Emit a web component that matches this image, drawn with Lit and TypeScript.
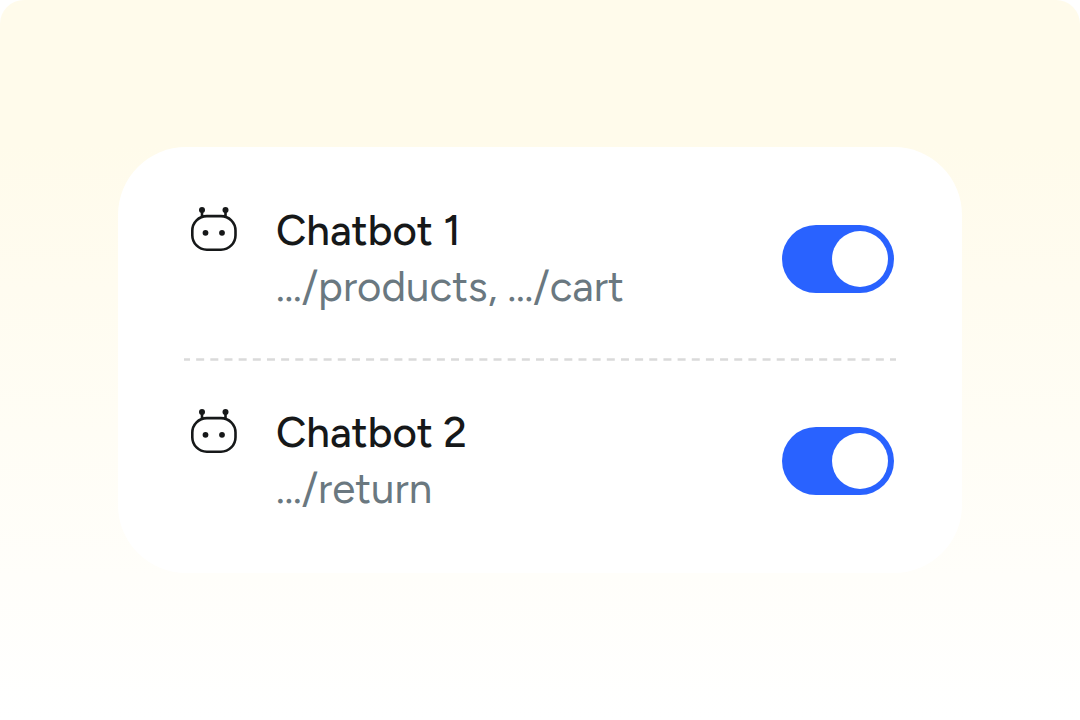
import { LitElement, html, css } from "lit";
import { customElement, property } from "lit/decorators.js";

@customElement("bot-row")
export class BotRow extends LitElement {
  @property() name = "";
  @property() paths = "";
  @property({ type: Boolean }) enabled = false;

  static styles = css`
    :host { display: block; }
    .row {
      display: flex;
      align-items: center;
      justify-content: space-between;
      gap: 24px;
      padding-right: 2px;
      cursor: pointer;
    }
    .info { display: flex; gap: 32px; min-width: 0; }
    .icon { flex: none; width: 60px; height: 60px; }
    .text { display: flex; flex-direction: column; font-size: 42px; line-height: 56px; }
    .name { color: #161819; font-weight: 500; }
    .paths { color: #6a7880; }
    .switch {
      appearance: none;
      flex: none;
      box-sizing: border-box;
      width: 112px;
      height: 68px;
      margin: 0;
      padding: 6px;
      border-radius: 34px;
      background: #c4c9cd;
      display: flex;
      cursor: pointer;
    }
    .switch::before {
      content: "";
      width: 56px;
      height: 56px;
      border-radius: 50%;
      background: #fff;
    }
    .switch:checked { background: #2962ff; justify-content: flex-end; }
  `;

  private toggle(e: Event) {
    this.enabled = (e.target as HTMLInputElement).checked;
  }

  render() {
    return html`
      <label class="row" for="switch">
        <span class="info">
          <svg class="icon" viewBox="0 0 60 60" fill="none" stroke="#161819" stroke-width="2.6" aria-hidden="true">
            <rect x="8.3" y="13.1" width="43.2" height="33.6" rx="14.5" />
            <path d="M18 13.8V7M41.5 13.8V7" />
            <g fill="#161819" stroke="none">
              <circle cx="18" cy="7" r="3" />
              <circle cx="41.5" cy="7" r="3" />
              <circle cx="21.5" cy="29.8" r="2.9" />
              <circle cx="38" cy="29.8" r="2.9" />
            </g>
          </svg>
          <span class="text">
            <span class="name">${this.name}</span>
            <span class="paths">${this.paths}</span>
          </span>
        </span>
        <input id="switch" class="switch" type="checkbox" role="switch"
          .checked=${this.enabled} @change=${this.toggle} />
      </label>
    `;
  }
}

@customElement("app-root")
export class AppRoot extends LitElement {
  static styles = css`
    :host {
      display: block;
      background: #fff;
      font-family: "Google Sans", Figtree, Lato, "Open Sans", sans-serif;
    }
    .page {
      box-sizing: border-box;
      min-height: 100vh;
      padding: 0 118px;
      display: flex;
      flex-direction: column;
      justify-content: center;
      border-radius: 24px 24px 0 0;
      background: linear-gradient(#fffbeb 0%, #fffbeb 20%, #fff 100%);
    }
    .card {
      padding: 56px 66px;
      border-radius: 68px;
      background: #fff;
    }
    .divider { display: block; width: 100%; height: 3px; margin: 43px 0 44px; }
  `;

  render() {
    return html`
      <main class="page">
        <section class="card">
          <bot-row name="Chatbot 1" paths="…/products, …/cart" enabled></bot-row>
          <svg class="divider" aria-hidden="true">
            <line x1="0" y1="1.5" x2="100%" y2="1.5" pathLength="712" stroke="#dadada"
              stroke-width="2.4" stroke-dasharray="8 6.16" stroke-dashoffset="2" />
          </svg>
          <bot-row name="Chatbot 2" paths="…/return" enabled></bot-row>
        </section>
      </main>
    `;
  }
}
